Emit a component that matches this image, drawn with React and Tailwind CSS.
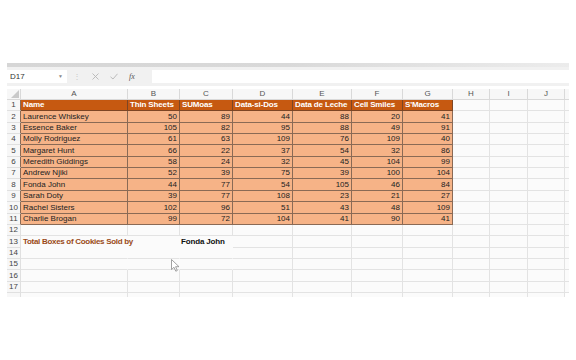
import React from "react";

const COLS = [
  { l: "A", w: "w-[107px]" },
  { l: "B", w: "w-[52px]" },
  { l: "C", w: "w-[53px]" },
  { l: "D", w: "w-[60px]" },
  { l: "E", w: "w-[59px]" },
  { l: "F", w: "w-[51px]" },
  { l: "G", w: "w-[50px]" },
  { l: "H", w: "w-[37px]" },
  { l: "I", w: "w-[38px]" },
  { l: "J", w: "w-[37px]" },
];

const HEAD = ["Name", "Thin Sheets", "SUMoas", "Data-si-Dos", "Data de Leche", "Cell Smiles", "S'Macros"];
const DATA = [
  ["Laurence Whiskey", 50, 89, 44, 88, 20, 41],
  ["Essence Baker", 105, 82, 95, 88, 49, 91],
  ["Molly Rodriguez", 61, 63, 109, 76, 109, 40],
  ["Margaret Hunt", 66, 22, 37, 54, 32, 86],
  ["Meredith Giddings", 58, 24, 32, 45, 104, 99],
  ["Andrew Njiki", 52, 39, 75, 39, 100, 104],
  ["Fonda John", 44, 77, 54, 105, 46, 84],
  ["Sarah Doty", 39, 77, 108, 23, 21, 27],
  ["Rachel Sisters", 102, 96, 51, 43, 48, 109],
  ["Charlie Brogan", 99, 72, 104, 41, 90, 41],
];

const H = [11, 12, 11, 11, 12, 11, 11, 12, 11, 12, 11, 11, 12, 11, 11, 12, 11];

function cellContent(r, c) {
  if (r === 1 && c < 7) return HEAD[c];
  if (r >= 2 && r <= 11 && c < 7) return DATA[r - 2][c];
  return null;
}

function Row({ r, h }) {
  const hc = h === 12 ? "h-[12px]" : "h-[11px]";
  const inData = r >= 1 && r <= 11;
  return (
    <div className={`flex ${hc}`}>
      <div
        className={`w-[14px] shrink-0 flex items-center justify-center bg-[#f7f7f7] border-r border-b text-[#444] text-[8px] ${
          inData ? "border-r-[#8a6a55] border-b-[#e0e0e0]" : "border-[#e0e0e0]"
        }`}
      >
        {r}
      </div>
      {COLS.map((col, c) => {
        const v = cellContent(r, c);
        let cls = "";
        if (r === 1 && c < 7) {
          cls = "bg-[#c65911] text-white font-bold tracking-[-0.15px] border-[#7d4524] pl-[2px] justify-start";
        } else if (inData && c < 7) {
          cls = `bg-[#f6b387] text-[#222] border-[#8a6a55] ${c === 0 ? "pl-[2px] justify-start" : "pr-[2px] justify-end"}`;
        } else {
          const noV = r >= 13 && r <= 15 && c <= 2;
          const noB = r === 13 && c <= 2;
          cls = `bg-[#fbfbfb] border-[#e3e3e3] ${noV ? "border-r-transparent" : ""} ${noB ? "border-b-transparent" : ""}`;
        }
        return (
          <div
            key={c}
            className={`${col.w} shrink-0 flex items-center border-r border-b overflow-visible whitespace-nowrap ${cls}`}
          >
            {v}
            {r === 13 && c === 0 && (
              <span className="relative z-10 font-bold tracking-[-0.3px] text-[#9a4a17] pl-[2px]">
                Total Boxes of Cookies Sold by
              </span>
            )}
            {r === 13 && c === 2 && (
              <span className="relative z-10 font-bold tracking-[-0.15px] text-[#111] pl-[1px]">Fonda John</span>
            )}
          </div>
        );
      })}
      <div className="w-[4px] shrink-0 bg-[#fbfbfb] border-b border-[#e3e3e3]" />
    </div>
  );
}

export default function App() {
  return (
    <div
      className="w-[576px] h-[360px] bg-white relative overflow-hidden text-[8px] leading-none"
      style={{ fontFamily: '"Liberation Sans", Arial, sans-serif' }}
    >
      <div className="pt-[63px] pl-[7px] w-[569px]">
        <div className="h-[4px] bg-gradient-to-r from-[#d6d6d6] via-[#d9d9d9] to-[#ececec]" />
        <div className="h-[19px] bg-[#f1f1f1] flex items-center">
          <div className="w-[60px] h-[13px] bg-white flex items-center justify-between pl-[3px] pr-[4px] text-[#333] text-[8px]">
            <span>D17</span>
            <span className="text-[#888] text-[5px]">▼</span>
          </div>
          <div className="w-[20px] flex justify-center text-[#c8c8c8] text-[8px]">⋮</div>
          <div className="w-[65px] flex items-center gap-[11px] pl-[5px]">
            <svg width="7" height="7" viewBox="0 0 7 7">
              <path d="M0.5 0.5 L6.5 6.5 M6.5 0.5 L0.5 6.5" stroke="#b5b5b5" strokeWidth="0.9" />
            </svg>
            <svg width="8" height="7" viewBox="0 0 8 7">
              <path d="M0.5 3.8 L3 6 L7.5 0.8" stroke="#b5b5b5" strokeWidth="0.9" fill="none" />
            </svg>
            <span className="text-[#555] italic text-[8px]" style={{ fontFamily: '"Liberation Serif", serif' }}>
              fx
            </span>
          </div>
          <div className="flex-1 h-[13px] bg-white" />
        </div>
        <div className="h-[3px] bg-white" />
        <div className="flex h-[11px] bg-[#f7f7f7] text-[#555]">
          <div className="w-[14px] shrink-0 border-r border-b border-[#d9d9d9] relative">
            <svg className="absolute right-[1px] bottom-[1px]" width="8" height="8" viewBox="0 0 8 8">
              <path d="M8 0 L8 8 L0 8 Z" fill="#c9c9c9" />
            </svg>
          </div>
          {COLS.map((col) => (
            <div
              key={col.l}
              className={`${col.w} shrink-0 flex items-center justify-center border-r border-b border-[#d9d9d9]`}
            >
              {col.l}
            </div>
          ))}
          <div className="w-[4px] shrink-0 border-b border-[#d9d9d9]" />
        </div>
        {H.map((h, i) => (
          <Row key={i} r={i + 1} h={h} />
        ))}
        <div className="flex h-[4px]">
          <div className="w-[14px] shrink-0 bg-[#f7f7f7] border-r border-[#e0e0e0]" />
          {COLS.map((col, c) => (
            <div key={c} className={`${col.w} shrink-0 bg-[#fbfbfb] border-r border-[#e3e3e3]`} />
          ))}
        </div>
      </div>
      <svg className="absolute left-[171px] top-[259px]" width="9" height="13" viewBox="0 0 9 13">
        <path
          d="M0.5 0.5 L0.5 10.5 L3 8.3 L4.8 12.2 L6.3 11.5 L4.6 7.7 L8 7.7 Z"
          fill="#ffffff"
          stroke="#8a8a8a"
          strokeWidth="0.8"
          strokeLinejoin="round"
        />
      </svg>
    </div>
  );
}
